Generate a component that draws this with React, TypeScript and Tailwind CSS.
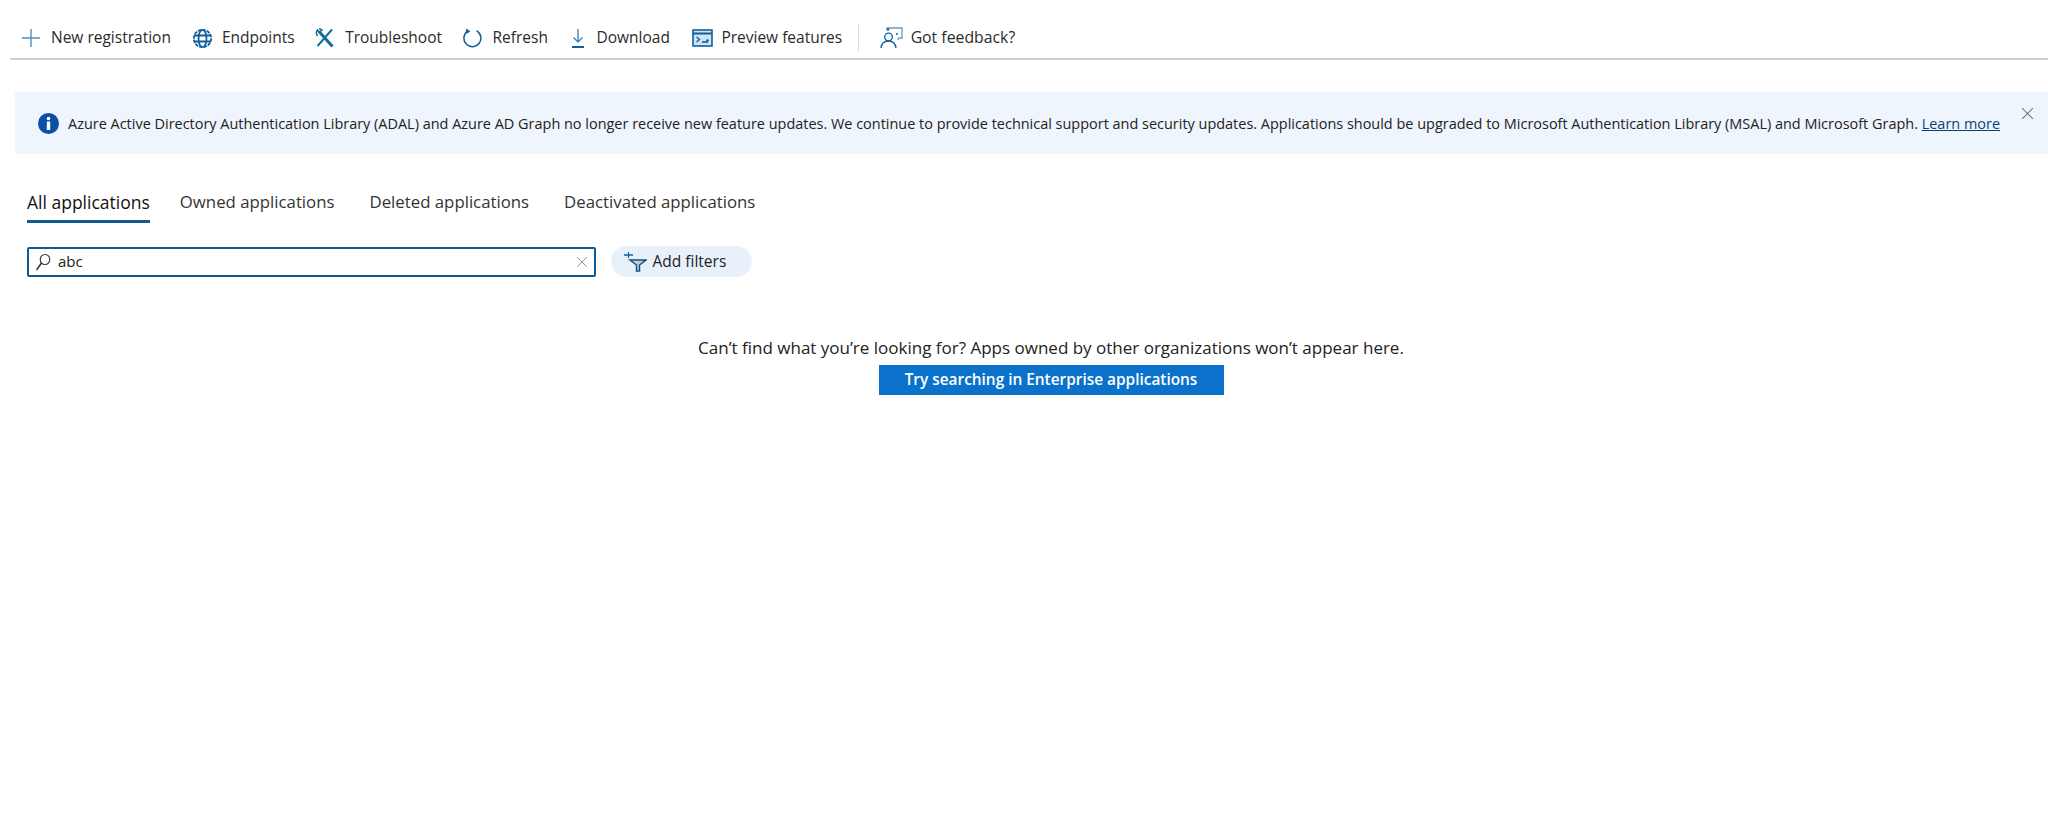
import type { ReactNode } from 'react'

const blue = '#0f5f9e'

function PlusIcon() {
    return (
        <svg width="20" height="20" viewBox="0 0 20 20" fill="none" stroke="#4f8fc4" strokeWidth="1.4">
            <path d="M10 1v18M1 10h18" />
        </svg>
    )
}

function GlobeIcon() {
    return (
        <svg width="21" height="21" viewBox="0 0 21 21" fill="none" stroke={blue} strokeWidth="1.8">
            <circle cx="10.5" cy="10.5" r="8.7" strokeDasharray="3.5 1" />
            <ellipse cx="10.5" cy="10.5" rx="4" ry="8.7" />
            <path d="M2 7.5h17M2 13.5h17" />
        </svg>
    )
}

function ToolsIcon() {
    return (
        <svg width="20" height="20" viewBox="0 0 20 20" fill="none" stroke="#0f6f96">
            <path d="M17 1.500 2.500 18" strokeWidth="2" />
            <path d="M4 3.500 17.500 18.500" strokeWidth="3" />
            <path d="M2.500 8c-1.500-2-1.500-4 0-6l2 2.500 2.500-2.500c-.5-.5-1.500-1-3-1" strokeWidth="1.500" />
        </svg>
    )
}

function RefreshIcon() {
    return (
        <svg width="21" height="21" viewBox="0 0 21 21" fill="none" stroke={blue} strokeWidth="1.5">
            <path d="M6.500 3.200a8.500 8.500 0 1 0 9-.5" />
            <path d="M5.500 1.200l3.200 2.200-3.200 1.800z" fill={blue} strokeWidth="1" />
        </svg>
    )
}

function DownloadIcon() {
    return (
        <svg width="14" height="21" viewBox="0 0 14 21" fill="none">
            <path d="M7 1v13M2.500 9.500 7 14l4.500-4.500" stroke="#3f86c0" strokeWidth="1.4" />
            <path d="M1 19h12" stroke={blue} strokeWidth="2" />
        </svg>
    )
}

function PreviewIcon() {
    return (
        <svg width="21" height="18" viewBox="0 0 21 18" fill="none">
            <rect x="1" y="1" width="19" height="16" fill="#cfe2f3" stroke={blue} strokeWidth="1.6" />
            <path d="M1 4.500h19" stroke={blue} strokeWidth="2" />
            <path d="M4.500 8l3 2.500-3 2.500" stroke={blue} strokeWidth="1.3" />
            <path d="M10 13h6" stroke={blue} strokeWidth="1.6" />
            <circle cx="15.500" cy="11.500" r="1.300" fill={blue} />
        </svg>
    )
}

function FeedbackIcon() {
    return (
        <svg width="23" height="22" viewBox="0 0 23 22" fill="none" stroke={blue} strokeWidth="1.3">
            <circle cx="8.500" cy="10" r="3.800" />
            <path d="M1 21c.5-4 3-7 7.500-7s7 3 7.500 7" />
            <path d="M7 3V1h15v10h-3l-1.500 2" stroke="#6b9cc4" />
            <circle cx="17" cy="7" r="1" fill={blue} stroke="none" />
            <circle cx="8" cy="2.500" r="1.300" fill={blue} stroke="none" />
        </svg>
    )
}

function InfoIcon() {
    return (
        <svg width="21" height="21" viewBox="0 0 21 21">
            <circle cx="10.500" cy="10.500" r="10.500" fill="#0b4fa8" />
            <circle cx="10.500" cy="5.500" r="1.800" fill="#fff" />
            <rect x="8.800" y="8.500" width="3.400" height="8.500" fill="#fff" />
        </svg>
    )
}

function CloseIcon({ size, color }: { size: number; color: string }) {
    return (
        <svg width={size} height={size} viewBox="0 0 12 12" fill="none" stroke={color} strokeWidth="1">
            <path d="M1 1l10 10M11 1 1 11" />
        </svg>
    )
}

function SearchIcon() {
    return (
        <svg width="16" height="18" viewBox="0 0 16 18" fill="none" stroke="#333" strokeWidth="1.1">
            <ellipse cx="10" cy="6.500" rx="4.800" ry="5" />
            <path d="M6.500 10 1.500 17" strokeWidth="1.500" />
        </svg>
    )
}

function FilterIcon() {
    return (
        <svg width="24" height="20" viewBox="0 0 24 20" fill="none">
            <path d="M1 3h9" stroke={blue} strokeWidth="1.500" />
            <path d="M5.500 0v6" stroke={blue} strokeWidth="1.200" />
            <path d="M7 8h16l-6.500 5v6h-3v-6z" fill="#b9cfe2" stroke="#1d4f78" strokeWidth="1.500" />
        </svg>
    )
}

function ToolbarItem({ icon, label, className }: { icon: ReactNode; label: string; className: string }) {
    return (
        <div className={`flex items-center ${className}`}>
            {icon}
            <span className="text-[15.5px] text-[#2b2b2b]">{label}</span>
        </div>
    )
}

function Tab({ label, active, className }: { label: string; active?: boolean; className?: string }) {
    return (
        <div className={`flex h-[39px] items-center border-b-[3px] ${active ? 'border-[#0f5a94] text-[#111]' : 'border-transparent text-[#333]'} ${className ?? ''}`}>
            <span className={active ? 'text-[17.500px]' : 'text-[16.800px]'}>{label}</span>
        </div>
    )
}

export default function App() {
    return (
        <div className="min-h-[834px] bg-white font-['Open_Sans',sans-serif]">
            <div className="ml-[10px] flex h-[60px] items-center border-b-2 border-[#cfcfcf] pl-[11px] pt-[18px]">
                <ToolbarItem icon={<PlusIcon />} label="New registration" className="gap-[10px]" />
                <ToolbarItem icon={<GlobeIcon />} label="Endpoints" className="ml-[21px] gap-[9px]" />
                <ToolbarItem icon={<ToolsIcon />} label="Troubleshoot" className="ml-[20px] gap-[10.500px]" />
                <ToolbarItem icon={<RefreshIcon />} label="Refresh" className="ml-[18.500px] gap-[11px]" />
                <ToolbarItem icon={<DownloadIcon />} label="Download" className="ml-[23px] gap-[11.500px]" />
                <ToolbarItem icon={<PreviewIcon />} label="Preview features" className="ml-[22px] gap-[8.500px]" />
                <div className="ml-[16px] h-[26px] w-[1px] bg-[#dcdcdc]" />
                <div className="ml-[21px] flex items-center gap-[7.500px]">
                    <FeedbackIcon />
                    <span className="text-[15.800px] text-[#2b2b2b]">Got feedback?</span>
                </div>
            </div>

            <div className="relative ml-[15px] mt-[32px] flex h-[62px] items-center bg-[#eff5fc] pl-[23px]">
                <InfoIcon />
                <p className="ml-[9px] mt-[2px] whitespace-nowrap text-[14.460px] text-[#222]">
                    Azure Active Directory Authentication Library (ADAL) and Azure AD Graph no longer receive new feature updates. We continue to provide technical support and security updates. Applications should be upgraded to Microsoft Authentication Library (MSAL) and Microsoft Graph.{' '}
                    <span className="text-[#0a3f7a] underline">Learn more</span>
                </p>
                <div className="absolute right-[14px] top-[15px]">
                    <CloseIcon size={13} color="#777" />
                </div>
            </div>

            <div className="mt-[30px] flex gap-[35px] pl-[27px]">
                <Tab label="All applications" active className="mr-[-5px]" />
                <Tab label="Owned applications" />
                <Tab label="Deleted applications" />
                <Tab label="Deactivated applications" />
            </div>

            <div className="mt-[23px] flex items-center gap-[15px] pl-[27px]">
                <div className="flex h-[30px] w-[569px] items-center rounded-[2px] border-2 border-[#0f5a94] pl-[6px] pr-[6px]">
                    <SearchIcon />
                    <span className="ml-[7px] text-[15px] text-[#222]">abc</span>
                    <div className="ml-auto">
                        <CloseIcon size={12} color="#999" />
                    </div>
                </div>
                <div className="flex h-[31px] w-[141px] items-center gap-[5.500px] rounded-full bg-[#e8f1fa] pl-[12px]">
                    <FilterIcon />
                    <span className="text-[15.500px] text-[#222]">Add filters</span>
                </div>
            </div>

            <div className="mt-[59px] flex flex-col items-center pl-[54px]">
                <p className="text-[17px] leading-[24px] text-[#222]">Can’t find what you’re looking for? Apps owned by other organizations won’t appear here.</p>
                <button className="mt-[5px] flex h-[30px] w-[345px] items-center justify-center bg-[#0b72cc] text-[15.400px] font-semibold text-white">
                    Try searching in Enterprise applications
                </button>
            </div>
        </div>
    )
}
